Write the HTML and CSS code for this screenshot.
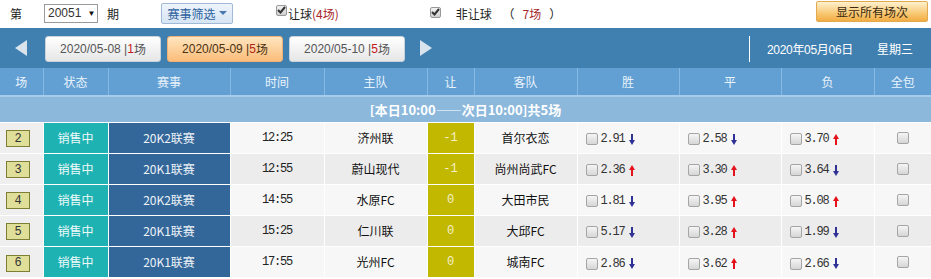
FILE: index.html
```html
<!DOCTYPE html>
<html lang="zh-CN">
<head>
<meta charset="utf-8">
<title>竞彩</title>
<link rel="stylesheet" href="styles.css">
</head>
<body>
<div class="page">
  <div class="topbar">
    <span class="lbl l1">第</span>
    <span class="select">20051 <span class="caret">▼</span></span>
    <span class="lbl l2">期</span>
    <span class="filter">赛事筛选 <span class="tri"></span></span>
    <span class="cbx c1"><svg width="9" height="8" viewBox="0 0 9 8"><path d="M1 4L3.5 6.5L8 1" fill="none" stroke="#333" stroke-width="2"/></svg></span>
    <span class="cbtext">让球<span class="red">(4场)</span></span>
    <span class="cbx c2"><svg width="9" height="8" viewBox="0 0 9 8"><path d="M1 4L3.5 6.5L8 1" fill="none" stroke="#333" stroke-width="2"/></svg></span>
    <span class="cbtext t2">非让球 <span class="paren">（</span><span class="red">7场</span><span class="paren">）</span></span>
    <span class="showall">显示所有场次</span>
  </div>
  <div class="nav">
    <svg class="arr al" width="12" height="16" viewBox="0 0 12 16"><path d="M12 0V16L0 8Z" fill="#d9e3ec"/></svg>
    <div class="tabs">
      <span class="tab">2020/05-08 |<em>1</em>场</span>
      <span class="tab on">2020/05-09 |<em>5</em>场</span>
      <span class="tab">2020/05-10 |<em>5</em>场</span>
    </div>
    <svg class="arr ar" width="12" height="16" viewBox="0 0 12 16"><path d="M0 0V16L12 8Z" fill="#d9e3ec"/></svg>
    <span class="vline"></span>
    <span class="date">2020年05月06日</span>
    <span class="week">星期三</span>
  </div>
  <table class="grid">
    <colgroup>
      <col class="w-no"><col class="w-st"><col class="w-lg"><col class="w-tm"><col class="w-hm"><col class="w-rq"><col class="w-aw"><col class="w-od"><col class="w-od"><col class="w-od2"><col class="w-all">
    </colgroup>
    <thead>
      <tr class="head">
        <th>场</th><th>状态</th><th>赛事</th><th>时间</th><th>主队</th><th>让</th><th>客队</th><th>胜</th><th>平</th><th>负</th><th>全包</th>
      </tr>
      <tr class="sum"><th colspan="11">[本日10:00——次日10:00]共5场</th></tr>
    </thead>
    <tbody>
      <tr class="odd">
        <td class="no"><span class="nbox">2</span></td><td class="st">销售中</td><td class="lg">20K2联赛</td><td class="tm">12:25</td><td class="tn">济州联</td><td class="rq">-1</td><td class="tn">首尔衣恋</td>
        <td class="od"><span class="cb"></span><span class="v">2.91</span><svg class="dn" width="6" height="11" viewBox="0 0 6 11"><path d="M3 0V7" stroke="#2f3196" stroke-width="2"/><path d="M0 6H6L3 11Z" fill="#2f3196"/></svg></td>
        <td class="od"><span class="cb"></span><span class="v">2.58</span><svg class="dn" width="6" height="11" viewBox="0 0 6 11"><path d="M3 0V7" stroke="#2f3196" stroke-width="2"/><path d="M0 6H6L3 11Z" fill="#2f3196"/></svg></td>
        <td class="od"><span class="cb"></span><span class="v">3.70</span><svg class="up" width="6" height="11" viewBox="0 0 6 11"><path d="M3 4V11" stroke="#e5121b" stroke-width="2"/><path d="M0 5H6L3 0Z" fill="#e5121b"/></svg></td>
        <td class="all"><span class="cb"></span></td>
      </tr>
      <tr class="even">
        <td class="no"><span class="nbox">3</span></td><td class="st">销售中</td><td class="lg">20K1联赛</td><td class="tm">12:55</td><td class="tn">蔚山现代</td><td class="rq">-1</td><td class="tn">尚州尚武FC</td>
        <td class="od"><span class="cb"></span><span class="v">2.36</span><svg class="up" width="6" height="11" viewBox="0 0 6 11"><path d="M3 4V11" stroke="#e5121b" stroke-width="2"/><path d="M0 5H6L3 0Z" fill="#e5121b"/></svg></td>
        <td class="od"><span class="cb"></span><span class="v">3.30</span><svg class="up" width="6" height="11" viewBox="0 0 6 11"><path d="M3 4V11" stroke="#e5121b" stroke-width="2"/><path d="M0 5H6L3 0Z" fill="#e5121b"/></svg></td>
        <td class="od"><span class="cb"></span><span class="v">3.64</span><svg class="dn" width="6" height="11" viewBox="0 0 6 11"><path d="M3 0V7" stroke="#2f3196" stroke-width="2"/><path d="M0 6H6L3 11Z" fill="#2f3196"/></svg></td>
        <td class="all"><span class="cb"></span></td>
      </tr>
      <tr class="odd">
        <td class="no"><span class="nbox">4</span></td><td class="st">销售中</td><td class="lg">20K2联赛</td><td class="tm">14:55</td><td class="tn">水原FC</td><td class="rq">0</td><td class="tn">大田市民</td>
        <td class="od"><span class="cb"></span><span class="v">1.81</span><svg class="dn" width="6" height="11" viewBox="0 0 6 11"><path d="M3 0V7" stroke="#2f3196" stroke-width="2"/><path d="M0 6H6L3 11Z" fill="#2f3196"/></svg></td>
        <td class="od"><span class="cb"></span><span class="v">3.95</span><svg class="up" width="6" height="11" viewBox="0 0 6 11"><path d="M3 4V11" stroke="#e5121b" stroke-width="2"/><path d="M0 5H6L3 0Z" fill="#e5121b"/></svg></td>
        <td class="od"><span class="cb"></span><span class="v">5.08</span><svg class="up" width="6" height="11" viewBox="0 0 6 11"><path d="M3 4V11" stroke="#e5121b" stroke-width="2"/><path d="M0 5H6L3 0Z" fill="#e5121b"/></svg></td>
        <td class="all"><span class="cb"></span></td>
      </tr>
      <tr class="even">
        <td class="no"><span class="nbox">5</span></td><td class="st">销售中</td><td class="lg">20K1联赛</td><td class="tm">15:25</td><td class="tn">仁川联</td><td class="rq">0</td><td class="tn">大邱FC</td>
        <td class="od"><span class="cb"></span><span class="v">5.17</span><svg class="dn" width="6" height="11" viewBox="0 0 6 11"><path d="M3 0V7" stroke="#2f3196" stroke-width="2"/><path d="M0 6H6L3 11Z" fill="#2f3196"/></svg></td>
        <td class="od"><span class="cb"></span><span class="v">3.28</span><svg class="up" width="6" height="11" viewBox="0 0 6 11"><path d="M3 4V11" stroke="#e5121b" stroke-width="2"/><path d="M0 5H6L3 0Z" fill="#e5121b"/></svg></td>
        <td class="od"><span class="cb"></span><span class="v">1.99</span><svg class="dn" width="6" height="11" viewBox="0 0 6 11"><path d="M3 0V7" stroke="#2f3196" stroke-width="2"/><path d="M0 6H6L3 11Z" fill="#2f3196"/></svg></td>
        <td class="all"><span class="cb"></span></td>
      </tr>
      <tr class="odd">
        <td class="no"><span class="nbox">6</span></td><td class="st">销售中</td><td class="lg">20K1联赛</td><td class="tm">17:55</td><td class="tn">光州FC</td><td class="rq">0</td><td class="tn">城南FC</td>
        <td class="od"><span class="cb"></span><span class="v">2.86</span><svg class="dn" width="6" height="11" viewBox="0 0 6 11"><path d="M3 0V7" stroke="#2f3196" stroke-width="2"/><path d="M0 6H6L3 11Z" fill="#2f3196"/></svg></td>
        <td class="od"><span class="cb"></span><span class="v">3.62</span><svg class="up" width="6" height="11" viewBox="0 0 6 11"><path d="M3 4V11" stroke="#e5121b" stroke-width="2"/><path d="M0 5H6L3 0Z" fill="#e5121b"/></svg></td>
        <td class="od"><span class="cb"></span><span class="v">2.66</span><svg class="dn" width="6" height="11" viewBox="0 0 6 11"><path d="M3 0V7" stroke="#2f3196" stroke-width="2"/><path d="M0 6H6L3 11Z" fill="#2f3196"/></svg></td>
        <td class="all"><span class="cb"></span></td>
      </tr>
    </tbody>
  </table>
</div>
</body>
</html>
```
FILE: styles.css
```css
* { box-sizing: border-box; }
html, body { margin: 0; padding: 0; background: #fff; }
body {
  font-family: "Noto Sans CJK SC", "Liberation Sans", sans-serif;
  font-size: 12px;
  color: #333;
}
.page { width: 931px; }

/* top bar */
.topbar {
  height: 28px;
  display: flex;
  align-items: center;
  padding-bottom: 2px;
}
.lbl { font-size: 12px; color: #222; }
.l1 { margin-left: 10px; }
.select {
  margin-left: 22px;
  width: 54px;
  height: 19px;
  border: 1px solid #9a9a9a;
  display: flex;
  align-items: center;
  padding-left: 3px;
  font-family: "Liberation Sans", sans-serif;
  font-size: 12px;
  color: #333;
}
.caret { font-size: 8px; margin-left: 6px; color: #111; }
.l2 { margin-left: 9px; }
.filter {
  margin-left: 42px;
  width: 72px;
  height: 21px;
  border: 1px solid #9fb9d6;
  border-radius: 2px;
  background: linear-gradient(#eef4fb, #d6e4f3);
  color: #2c5f9e;
  display: flex;
  align-items: center;
  justify-content: center;
  gap: 3px;
  font-size: 12px;
}
.tri {
  width: 0; height: 0;
  border-left: 4px solid transparent;
  border-right: 4px solid transparent;
  border-top: 4px solid #4a78b0;
}
.cbx {
  width: 11px; height: 11px;
  border: 1px solid #999;
  border-radius: 2px;
  background: linear-gradient(#f2f2f2, #cfcfcf);
  display: flex; align-items: center; justify-content: center;
}
.c1 { margin-left: 43px; margin-top: -6px; }
.c2 { margin-left: 91px; margin-top: -2px; }
.cbtext { margin-left: 1px; color: #222; font-size: 12px; }
.t2 { margin-left: 15px; }
.paren { margin: 0 8px; }
.red { color: #a6262a; }
.showall {
  margin-left: auto;
  margin-right: 3px;
  width: 112px;
  height: 21px;
  border: 1px solid #e3a94f;
  border-radius: 2px;
  background: linear-gradient(#fff1cf, #f8c873 60%, #f2ad43);
  color: #3a2a10;
  font-size: 12px;
  display: flex; align-items: center; justify-content: center;
  margin-top: -4px;
}

/* nav */
.nav {
  height: 40px;
  background: #3f80b1;
  display: flex;
  align-items: center;
}
.arr { display: block; }
.al { margin-left: 15px; }
.tabs { display: flex; gap: 6px; margin-left: 18px; }
.tab {
  width: 116px;
  height: 26px;
  border-radius: 3px;
  border: 1px solid #c9d3dc;
  background: linear-gradient(#ffffff, #e6e6e6);
  color: #555;
  font-family: "Liberation Sans", "Noto Sans CJK SC", sans-serif;
  font-size: 12px;
  display: flex; align-items: center; justify-content: center;
  margin-top: 1px;
}
.tab em { font-style: normal; color: #c4161c; }
.tab.on {
  background: linear-gradient(#ffe5bf, #fbbd7a);
  border-color: #f1b175;
  color: #4a3212;
}
.tab.on em { color: #b32317; }
.ar { margin-left: 15px; }
.vline {
  margin-left: auto;
  width: 1px; height: 26px;
  background: #fff;
  margin-top: 1px;
}
.date {
  margin-left: 17px;
  color: #fff;
  font-size: 12px;
  letter-spacing: -0.3px;
  font-family: "Liberation Sans", "Noto Sans CJK SC", sans-serif;
}
.week { margin-left: 24px; margin-right: 18px; color: #fff; font-size: 12px; }

/* table */
.grid {
  width: 931px;
  border-collapse: collapse;
  table-layout: fixed;
}
.w-no { width: 43px; }
.w-st { width: 65px; }
.w-lg { width: 122px; }
.w-tm { width: 94px; }
.w-hm { width: 103px; }
.w-rq { width: 47px; }
.w-aw { width: 103px; }
.w-od { width: 102px; }
.w-od2 { width: 93px; }
.w-all { width: 57px; }

.head th {
  height: 28px;
  background: #62a0d4;
  color: #e9f3fb;
  font-weight: normal;
  font-size: 12px;
  border-left: 1px solid #86b9e3;
  padding: 0;
}
.head th:first-child { border-left: none; }
.sum th {
  height: 26px;
  background: #8cb8dc;
  border-top: 2px solid #a7cbe9;
  color: #fff;
  font-weight: bold;
  font-size: 13px;
  font-family: "Noto Sans CJK SC", serif;
  padding: 0;
}
tbody td {
  height: 31px;
  border-top: 1px solid #fff;
  border-left: 1px solid #fff;
  padding: 0;
  text-align: center;
  font-size: 12px;
  color: #222;
}
tbody td:first-child { border-left: none; }
.odd td { background: #f7f7f7; }
.even td { background: #ececec; }
td.no { background: #efefef; text-align: left; }
.nbox {
  display: inline-flex;
  margin-left: 6px;
  width: 24px; height: 17px;
  border: 1px solid #7e7e34;
  background: #dfdf9a;
  align-items: center; justify-content: center;
  font-family: "Liberation Mono", monospace;
  font-size: 12px;
  color: #333;
}
td.st { background: #1fb2b3 !important; color: #eefafa; font-size: 12px; }
td.lg { background: #33679a !important; color: #eef3f8; font-size: 12px; }
td.tm { font-family: "Liberation Mono", monospace; font-size: 12px; letter-spacing: -1.2px; color: #222; }
td.tn { font-size: 12px; color: #111; }
td.rq { background: #c2b800 !important; color: #f4f0c8; font-family: "Liberation Mono", monospace; font-size: 12px; }
td.od { text-align: left; padding-left: 8px; white-space: nowrap; }
td.od .cb { vertical-align: middle; }
td.od .v {
  display: inline-block;
  margin-left: 3px;
  font-family: "Liberation Mono", monospace;
  font-size: 12px;
  letter-spacing: -1.2px;
  color: #333;
  vertical-align: middle;
}
td.od svg { vertical-align: middle; margin-left: 4px; }
.cb {
  display: inline-block;
  width: 12px; height: 12px;
  border: 1px solid #a5a5a5;
  border-radius: 2px;
  background: linear-gradient(#f5f5f5, #d6d6d6);
}
td.all .cb { margin-top: -4px; vertical-align: middle; }
```
